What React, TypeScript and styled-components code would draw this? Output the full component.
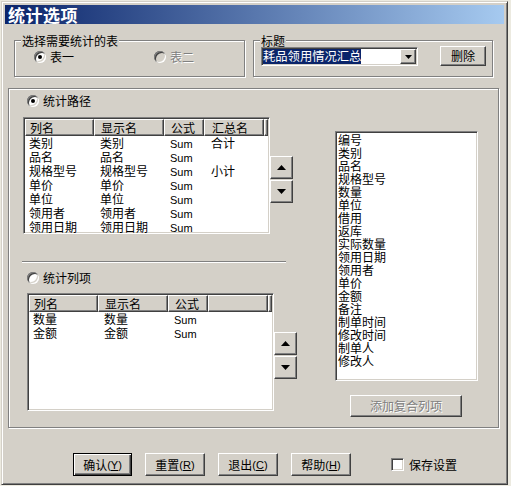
import React from 'react'
import styled, { createGlobalStyle, css } from 'styled-components'

const FACE = '#d4d0c8'
const SHADOW = '#808080'
const DARK = '#404040'
const HILITE = '#ffffff'
const CJK = `"Noto Sans CJK SC", "Noto Sans", sans-serif`
const LATIN = `"Liberation Sans", "Noto Sans CJK SC", sans-serif`

const GlobalStyle = createGlobalStyle`
  html, body {
    margin: 0;
    padding: 0;
  }
  body {
    width: 511px;
    height: 486px;
    overflow: hidden;
    background: #eceae0;
    font-family: ${CJK};
    font-size: 12px;
    color: #000;
  }
`

const raised = css`
  box-sizing: border-box;
  background: ${FACE};
  border: 1px solid;
  border-color: ${HILITE} ${DARK} ${DARK} ${HILITE};
  box-shadow: inset -1px -1px 0 ${SHADOW};
`

const sunken = css`
  box-sizing: border-box;
  background: #fff;
  border: 1px solid;
  border-color: ${SHADOW} ${HILITE} ${HILITE} ${SHADOW};
  box-shadow: inset 1px 1px 0 ${DARK}, inset -1px -1px 0 ${FACE};
`

const etched = css`
  box-sizing: border-box;
  border: 1px solid ${SHADOW};
  box-shadow: inset 1px 1px 0 ${HILITE}, 1px 1px 0 ${HILITE};
`

const disabledText = css`
  color: ${SHADOW};
  text-shadow: 1px 1px 0 ${HILITE};
`

const Window = styled.div`
  box-sizing: border-box;
  margin: 1px 0 0 1px;
  width: 507px;
  height: 484px;
  padding: 3px;
  display: flex;
  flex-direction: column;
  background: ${FACE};
  border: 1px solid;
  border-color: ${FACE} ${DARK} ${DARK} ${FACE};
  box-shadow: inset 1px 1px 0 ${HILITE}, inset -1px -1px 0 ${SHADOW};
`

const TitleBar = styled.div`
  height: 19px;
  padding-left: 3px;
  background: linear-gradient(to right, #0a246a, #a6caf0);
  color: #fff;
  font-family: ${CJK};
  font-weight: 700;
  font-size: 17px;
  line-height: 19px;
  letter-spacing: 0.5px;
`

const TopRow = styled.div`
  display: flex;
  margin: 16px 0 0 9px;
`

const GroupBox = styled.div<{ $width: number; $gap?: number }>`
  ${etched};
  position: relative;
  width: ${p => p.$width}px;
  height: 37px;
  margin-left: ${p => p.$gap ?? 0}px;
  display: flex;
  align-items: flex-start;
`

const Caption = styled.span`
  position: absolute;
  top: -7px;
  left: 6px;
  padding: 0 1px;
  background: ${FACE};
  line-height: 13px;
`

const TableChoices = styled.div`
  display: flex;
  padding: 9px 0 0 19px;
`

const RadioLabel = styled.label<{ $width?: number; $disabled?: boolean }>`
  display: flex;
  align-items: center;
  gap: 4px;
  height: 14px;
  line-height: 14px;
  width: ${p => (p.$width ? `${p.$width}px` : 'auto')};
  ${p => p.$disabled && disabledText};
`

const RadioDot = styled.span<{ $checked?: boolean; $disabled?: boolean }>`
  position: relative;
  flex: none;
  width: 12px;
  height: 12px;
  border-radius: 50%;
  background: ${p => (p.$disabled ? FACE : '#fff')};
  box-shadow: inset 1px 1px 0 ${SHADOW}, inset -1px -1px 0 ${HILITE},
    inset 2px 2px 0 ${DARK}, inset -2px -2px 0 ${FACE};

  &::after {
    content: '';
    display: ${p => (p.$checked ? 'block' : 'none')};
    position: absolute;
    left: 4px;
    top: 4px;
    width: 4px;
    height: 4px;
    border-radius: 50%;
    background: #000;
  }
`

const TitleControls = styled.div`
  display: flex;
  align-items: flex-start;
  padding: 6px 0 0 7px;
`

const Combo = styled.div`
  ${sunken};
  width: 157px;
  height: 19px;
  padding: 1px;
  display: flex;
  align-items: center;
`

const ComboText = styled.div`
  flex: 1;
  display: flex;
  white-space: nowrap;
`

const Selected = styled.span`
  background: #0a246a;
  color: #fff;
  line-height: 15px;
  font-size: 12.3px;
`

const DropButton = styled.div`
  ${raised};
  width: 16px;
  height: 15px;
  display: flex;
  align-items: center;
  justify-content: center;
  flex: none;
`

const PushButton = styled.div<{ $width: number; $height?: number; $default?: boolean; $disabled?: boolean }>`
  ${raised};
  width: ${p => p.$width}px;
  height: ${p => p.$height ?? 23}px;
  display: flex;
  align-items: center;
  justify-content: center;
  flex: none;
  line-height: 14px;
  white-space: nowrap;
  ${p => p.$disabled && disabledText};
  ${p =>
    p.$default &&
    css`
      border-color: #000;
      box-shadow: inset 1px 1px 0 ${HILITE}, inset -1px -1px 0 ${DARK}, inset -2px -2px 0 ${SHADOW};
    `};
`

const DeleteButton = styled(PushButton)`
  margin: -1px 0 0 22px;
`

const BigBox = styled.div`
  ${etched};
  width: 491px;
  height: 340px;
  margin: 11px 0 0 3px;
  display: flex;
`

const LeftColumn = styled.div`
  width: 291px;
  display: flex;
  flex-direction: column;
`

const RightColumn = styled.div`
  display: flex;
  flex-direction: column;
  padding: 42px 0 0 35px;
`

const RadioLine = styled.div<{ $top: number }>`
  margin: ${p => p.$top}px 0 0 18px;
`

const ListRow = styled.div<{ $top: number; $left: number }>`
  display: flex;
  align-items: flex-start;
  margin: ${p => p.$top}px 0 0 ${p => p.$left}px;
`

const ListView = styled.div<{ $width: number; $height: number }>`
  ${sunken};
  width: ${p => p.$width}px;
  height: ${p => p.$height}px;
  padding: 1px;
`

const HeaderRow = styled.div`
  display: flex;
  height: 17px;
`

const HeaderCell = styled.div<{ $width?: number; $pad: number }>`
  ${raised};
  ${p => (p.$width ? `width: ${p.$width}px; flex: none;` : 'flex: 1;')};
  padding-left: ${p => p.$pad}px;
  line-height: 15px;
  white-space: nowrap;
`

const DataRow = styled.div`
  display: flex;
  height: 14px;
  line-height: 14px;
`

const DataCell = styled.div<{ $width: number; $pad: number }>`
  width: ${p => p.$width}px;
  flex: none;
  box-sizing: border-box;
  padding-left: ${p => p.$pad}px;
  white-space: nowrap;
`

const Latin = styled.span`
  font-family: ${LATIN};
  font-size: 11px;
`

const SpinStack = styled.div<{ $gap: number }>`
  display: flex;
  flex-direction: column;
  gap: 1px;
  margin: 39px 0 0 ${p => p.$gap}px;
`

const SpinButton = styled.div`
  ${raised};
  width: 23px;
  height: 23px;
  display: flex;
  align-items: center;
  justify-content: center;
`

const Separator = styled.div`
  width: 264px;
  margin: 27px 0 0 13px;
  border-top: 1px solid ${SHADOW};
  border-bottom: 1px solid ${HILITE};
`

const ListBox = styled.div`
  ${sunken};
  width: 143px;
  height: 250px;
  padding: 1px 0 0 2px;
`

const ListItem = styled.div`
  height: 13px;
  line-height: 13px;
  white-space: nowrap;
`

const AddButton = styled(PushButton)`
  margin: 14px 0 0 15px;
`

const BottomRow = styled.div`
  display: flex;
  align-items: center;
  gap: 13px;
  margin: 25px 0 0 68px;
`

const CheckLabel = styled.label`
  display: flex;
  align-items: center;
  gap: 5px;
  margin-left: 27px;
  line-height: 14px;
`

const CheckBox = styled.span`
  ${sunken};
  width: 13px;
  height: 13px;
`

const Hot = styled.span`
  text-decoration: underline;
`

const Arrow = ({ dir }: { dir: 'up' | 'down' }) => (
  <svg width="9" height="5" viewBox="0 0 9 5">
    <polygon points={dir === 'up' ? '4.5,0 9,5 0,5' : '0,0 9,0 4.5,5'} fill="#000" />
  </svg>
)

const SmallArrow = () => (
  <svg width="7" height="4" viewBox="0 0 7 4">
    <polygon points="0,0 7,0 3.5,4" fill="#000" />
  </svg>
)

const COLS = [69, 70, 40, 60]
const PADS = [4, 6, 6, 7]

type Props = { headers: string[]; rows: string[][]; width: number; height: number }

const Grid = ({ headers, rows, width, height }: Props) => (
  <ListView $width={width} $height={height}>
    <HeaderRow>
      {headers.map((h, i) => (
        <HeaderCell key={i} $width={COLS[i]} $pad={PADS[i]}>
          {h}
        </HeaderCell>
      ))}
      <HeaderCell $pad={0} />
    </HeaderRow>
    {rows.map((r, ri) => (
      <DataRow key={ri}>
        {r.map((c, ci) => (
          <DataCell key={ci} $width={COLS[ci]} $pad={PADS[ci]}>
            {c === 'Sum' ? <Latin>{c}</Latin> : c}
          </DataCell>
        ))}
      </DataRow>
    ))}
  </ListView>
)

const Spin = ({ gap }: { gap: number }) => (
  <SpinStack $gap={gap}>
    <SpinButton>
      <Arrow dir="up" />
    </SpinButton>
    <SpinButton>
      <Arrow dir="down" />
    </SpinButton>
  </SpinStack>
)

const pathRows = [
  ['类别', '类别', 'Sum', '合计'],
  ['品名', '品名', 'Sum', ''],
  ['规格型号', '规格型号', 'Sum', '小计'],
  ['单价', '单价', 'Sum', ''],
  ['单位', '单位', 'Sum', ''],
  ['领用者', '领用者', 'Sum', ''],
  ['领用日期', '领用日期', 'Sum', ''],
]

const itemRows = [
  ['数量', '数量', 'Sum', ''],
  ['金额', '金额', 'Sum', ''],
]

const fields = [
  '编号', '类别', '品名', '规格型号', '数量', '单位', '借用', '返库', '实际数量',
  '领用日期', '领用者', '单价', '金额', '备注', '制单时间', '修改时间', '制单人', '修改人',
]

const buttons: [string, string][] = [
  ['确认', 'Y'],
  ['重置', 'R'],
  ['退出', 'C'],
  ['帮助', 'H'],
]

const App = () => (
  <>
    <GlobalStyle />
    <Window>
      <TitleBar>统计选项</TitleBar>

      <TopRow>
        <GroupBox $width={231}>
          <Caption>选择需要统计的表</Caption>
          <TableChoices>
            <RadioLabel $width={120}>
              <RadioDot $checked />
              表一
            </RadioLabel>
            <RadioLabel $disabled>
              <RadioDot $disabled />
              表二
            </RadioLabel>
          </TableChoices>
        </GroupBox>
        <GroupBox $width={240} $gap={8}>
          <Caption>标题</Caption>
          <TitleControls>
            <Combo>
              <ComboText>
                <Selected>耗品领用情况汇总</Selected>
              </ComboText>
              <DropButton>
                <SmallArrow />
              </DropButton>
            </Combo>
            <DeleteButton $width={46} $height={20}>
              删除
            </DeleteButton>
          </TitleControls>
        </GroupBox>
      </TopRow>

      <BigBox>
        <LeftColumn>
          <RadioLine $top={5}>
            <RadioLabel>
              <RadioDot $checked />
              统计路径
            </RadioLabel>
          </RadioLine>
          <ListRow $top={9} $left={14}>
            <Grid headers={['列名', '显示名', '公式', '汇总名']} rows={pathRows} width={247} height={117} />
            <Spin gap={0} />
          </ListRow>
          <Separator />
          <RadioLine $top={8}>
            <RadioLabel>
              <RadioDot />
              统计列项
            </RadioLabel>
          </RadioLine>
          <ListRow $top={8} $left={18}>
            <Grid headers={['列名', '显示名', '公式', '']} rows={itemRows} width={247} height={118} />
            <Spin gap={0} />
          </ListRow>
        </LeftColumn>
        <RightColumn>
          <ListBox>
            {fields.map(f => (
              <ListItem key={f}>{f}</ListItem>
            ))}
          </ListBox>
          <AddButton $width={112} $height={22} $disabled>
            添加复合列项
          </AddButton>
        </RightColumn>
      </BigBox>

      <BottomRow>
        {buttons.map(([label, key], i) => (
          <PushButton key={key} $width={i === 0 ? 59 : 60} $default={i === 0}>
            {label}
            <Latin>
              (<Hot>{key}</Hot>)
            </Latin>
          </PushButton>
        ))}
        <CheckLabel>
          <CheckBox />
          保存设置
        </CheckLabel>
      </BottomRow>
    </Window>
  </>
)

export default App
